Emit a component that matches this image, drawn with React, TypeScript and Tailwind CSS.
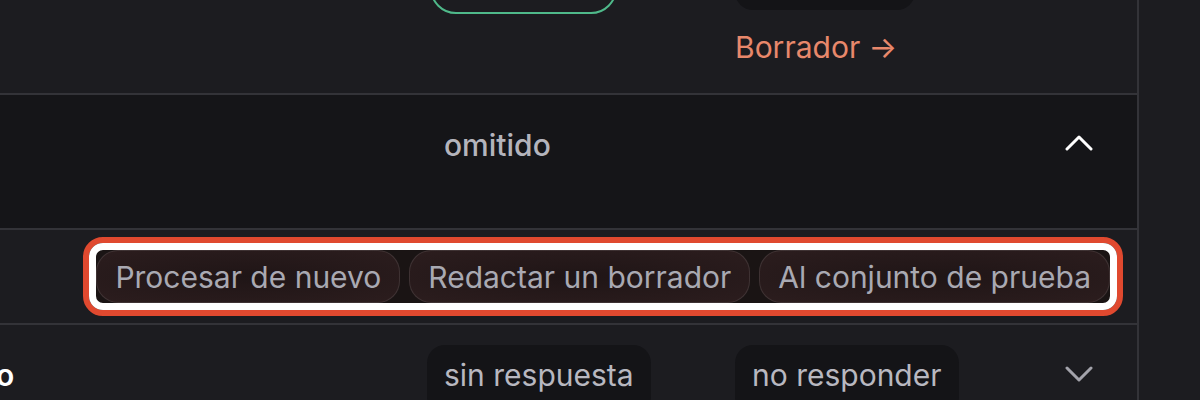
import { ReactNode } from 'react';

function Chevron({ up, className }: { up?: boolean; className?: string }) {
  return (
    <svg width="28" height="16" viewBox="0 0 28 16" fill="none" className={className}>
      <polyline
        points={up ? '2,14 14,2 26,14' : '2,2 14,14 26,2'}
        stroke="currentColor"
        strokeWidth="3"
        strokeLinecap="round"
        strokeLinejoin="round"
      />
    </svg>
  );
}

function ActionButton({ children }: { children: ReactNode }) {
  return (
    <button className="h-[53px] px-[18px] rounded-[22px] border border-white/10 bg-[radial-gradient(ellipse_at_center,#1f1516_0%,#2c1d1e_100%)] text-[30px] leading-none text-[#a9a9b2] whitespace-nowrap">
      {children}
    </button>
  );
}

export default function App() {
  return (
    <div className="w-[1200px] h-[400px] overflow-hidden flex bg-[#1c1c20] font-['Inter',sans-serif]">
      <div className="w-[1139px] shrink-0 flex flex-col border-r-2 border-[#333338]">
        {/* row: previous entry, partly above the fold */}
        <div className="h-[95px] shrink-0 grid grid-cols-[430px_305px_1fr] border-b-2 border-[#333338] bg-[#1c1c20]">
          <div />
          <div>
            <div className="-mt-[40px] w-[187px] h-[54px] rounded-[26px] border-2 border-[#4fb98a]" />
          </div>
          <div className="flex flex-col items-start">
            <div className="-mt-[40px] w-[180px] h-[50px] rounded-[18px] bg-[#141417]" />
            <a className="mt-[22px] text-[30px] leading-none text-[#e8886b]">Borrador →</a>
          </div>
        </div>

        {/* row: expanded */}
        <div className="h-[135px] shrink-0 grid grid-cols-[427px_1fr_98px] items-start border-b-2 border-[#333338] bg-[#151518]">
          <div />
          <div className="pt-[35px] pl-[17px] text-[30px] leading-none font-medium text-[#b4b4bc]">omitido</div>
          <div className="pt-[40px] pl-[26px] text-white">
            <Chevron up />
          </div>
        </div>

        {/* row: actions */}
        <div className="h-[95px] shrink-0 flex items-center justify-end pr-[14px] border-b-2 border-[#333338] bg-[#1c1c20]">
          <div className="rounded-[20px] border-[6px] border-[#e0492f]">
            <div className="rounded-[14px] border-[7px] border-white flex gap-[9px] bg-[#1a1414]">
              <ActionButton>Procesar de nuevo</ActionButton>
              <ActionButton>Redactar un borrador</ActionButton>
              <ActionButton>Al conjunto de prueba</ActionButton>
            </div>
          </div>
        </div>

        {/* row: next entry */}
        <div className="h-[110px] shrink-0 grid grid-cols-[427px_308px_1fr_98px] items-start bg-[#1c1c20]">
          <div className="pt-[35px] -ml-[4px] text-[30px] font-semibold text-white leading-none">o</div>
          <div className="pt-[20px]">
            <span className="inline-block h-[70px] px-[17px] pt-[15px] rounded-[18px] bg-[#141417] text-[30px] leading-none text-[#b8b8c0]">
              sin respuesta
            </span>
          </div>
          <div className="pt-[20px]">
            <span className="inline-block h-[70px] px-[17px] pt-[15px] rounded-[18px] bg-[#141417] text-[30px] leading-none text-[#b8b8c0]">
              no responder
            </span>
          </div>
          <div className="pt-[41px] pl-[26px] text-[#a3a3ab]">
            <Chevron />
          </div>
        </div>
      </div>
      <div className="flex-1 bg-[#1c1c20]" />
    </div>
  );
}
